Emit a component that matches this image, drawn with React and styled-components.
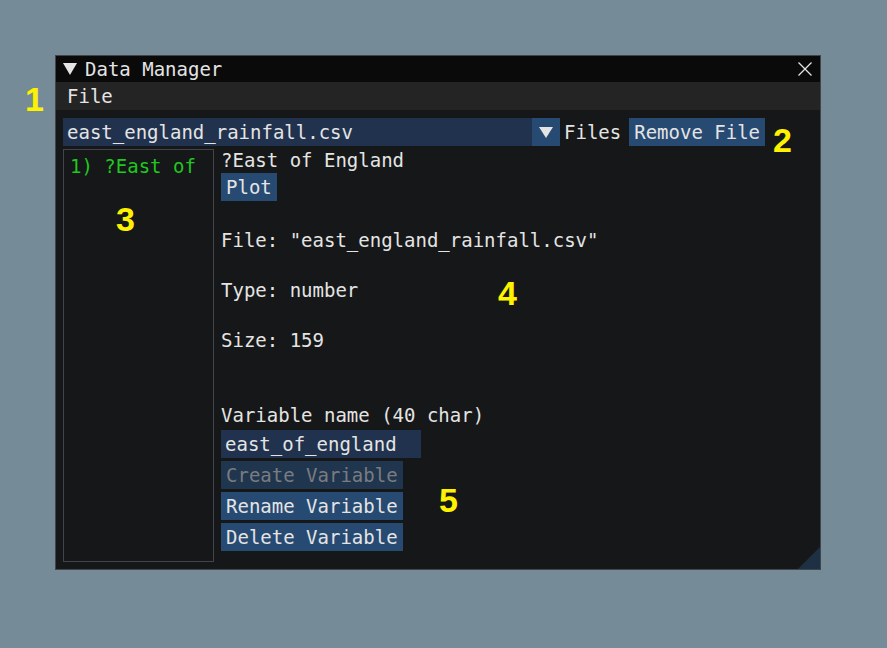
import styled, { createGlobalStyle } from "styled-components";

const GlobalStyle = createGlobalStyle`
    html, body {
        margin: 0;
        padding: 0;
    }
    body {
        background: #758b98;
        font-family: "DejaVu Sans Mono", "Liberation Mono", monospace;
    }
`

const Page = styled.div`
    position: relative;
    width: 887px;
    height: 648px;
    padding: 55px 0 0 55px;
    box-sizing: border-box;
`

const Window = styled.div`
    position: relative;
    width: 766px;
    height: 515px;
    box-sizing: border-box;
    border: 1px solid #43434c;
    background: #161718;
    display: flex;
    flex-direction: column;
    font-size: 19px;
    line-height: 22px;
    color: #e4e4e4;
    overflow: hidden;
`

const TitleBar = styled.div`
    display: flex;
    align-items: center;
    height: 26px;
    padding: 0 8px 0 7px;
    background: #0a0a0a;
`

const Title = styled.span`
    flex: 1;
    margin-left: 8px;
`

const MenuBar = styled.div`
    display: flex;
    align-items: center;
    height: 28px;
    padding-left: 11px;
    background: #242424;
`

const Content = styled.div`
    flex: 1;
    display: flex;
    flex-direction: column;
    padding: 8px 7px 7px 7px;
    min-height: 0;
`

const TopRow = styled.div`
    display: flex;
    align-items: center;
    height: 28px;
`

const Combo = styled.div`
    display: flex;
    width: 497px;
    height: 28px;
    background: #20324d;
`

const ComboText = styled.span`
    flex: 1;
    display: flex;
    align-items: center;
    padding-left: 4px;
`

const ComboArrow = styled.span`
    display: flex;
    align-items: center;
    justify-content: center;
    width: 28px;
    background: #274a72;
`

const Label = styled.span`
    margin-left: 4px;
`

const Button = styled.div`
    display: inline-flex;
    align-items: center;
    height: 28px;
    padding: 0 5px;
    margin-top: ${p => p.$top || 0}px;
    margin-left: ${p => p.$left || 0}px;
    background: ${p => (p.$disabled ? "#20354e" : "#274a72")};
    color: ${p => (p.$disabled ? "#7a7c80" : "#e4e4e4")};
    white-space: nowrap;
`

const Body = styled.div`
    flex: 1;
    display: flex;
    gap: 7px;
    margin-top: 3px;
    min-height: 0;
`

const ListChild = styled.div`
    width: 151px;
    box-sizing: border-box;
    border: 1px solid #43434c;
    padding: 5px 8px 6px 6px;
    overflow: hidden;
`

const ListItem = styled.div`
    color: #1fc81f;
    white-space: nowrap;
    overflow: hidden;
`

const Details = styled.div`
    display: flex;
    flex-direction: column;
    align-items: flex-start;
`

const Text = styled.div`
    margin-top: ${p => p.$top || 0}px;
    white-space: nowrap;
`

const Input = styled.div`
    display: flex;
    align-items: center;
    width: 200px;
    height: 28px;
    box-sizing: border-box;
    padding-left: 4px;
    margin-top: 4px;
    background: #20324d;
`

const Grip = styled.svg`
    position: absolute;
    right: 0;
    bottom: 0;
`

const Note = styled.span`
    position: absolute;
    left: ${p => p.$x}px;
    top: ${p => p.$y}px;
    font-family: "Liberation Sans", Arial, sans-serif;
    font-weight: bold;
    font-size: 34px;
    line-height: 34px;
    color: #fff200;
`

const Triangle = ({ w = 14, h = 12, color = "#e4e4e4" }) => (
    <svg width={w} height={h} viewBox={`0 0 ${w} ${h}`}>
        <polygon points={`0,0 ${w},0 ${w / 2},${h}`} fill={color} />
    </svg>
)

const CloseIcon = () => (
    <svg width="14" height="14" viewBox="0 0 14 14">
        <path d="M0.5 0.5 L13.5 13.5 M13.5 0.5 L0.5 13.5" stroke="#e4e4e4" strokeWidth="1.3" />
    </svg>
)

const notes = [
    { n: 1, x: 25, y: 82 },
    { n: 2, x: 773, y: 123 },
    { n: 3, x: 116, y: 202 },
    { n: 4, x: 498, y: 276 },
    { n: 5, x: 439, y: 483 },
]

const App = () => {
    return (
        <Page>
            <GlobalStyle />
            <Window>
                <TitleBar>
                    <Triangle w={14} h={12} />
                    <Title>Data Manager</Title>
                    <CloseIcon />
                </TitleBar>
                <MenuBar>File</MenuBar>
                <Content>
                    <TopRow>
                        <Combo>
                            <ComboText>east_england_rainfall.csv</ComboText>
                            <ComboArrow>
                                <Triangle w={14} h={11} />
                            </ComboArrow>
                        </Combo>
                        <Label>Files</Label>
                        <Button $left={8}>Remove File</Button>
                    </TopRow>
                    <Body>
                        <ListChild>
                            <ListItem>1) ?East of England</ListItem>
                        </ListChild>
                        <Details>
                            <Text>?East of England</Text>
                            <Button $top={2}>Plot</Button>
                            <Text $top={28}>File: "east_england_rainfall.csv"</Text>
                            <Text $top={28}>Type: number</Text>
                            <Text $top={28}>Size: 159</Text>
                            <Text $top={53}>Variable name (40 char)</Text>
                            <Input>east_of_england</Input>
                            <Button $top={3} $disabled>Create Variable</Button>
                            <Button $top={3}>Rename Variable</Button>
                            <Button $top={3}>Delete Variable</Button>
                        </Details>
                    </Body>
                </Content>
                <Grip width="22" height="22" viewBox="0 0 22 22">
                    <polygon points="22,0 22,22 0,22" fill="#1e3044" />
                </Grip>
            </Window>
            {notes.map(note => (
                <Note key={note.n} $x={note.x} $y={note.y}>{note.n}</Note>
            ))}
        </Page>
    )
}

export default App;
